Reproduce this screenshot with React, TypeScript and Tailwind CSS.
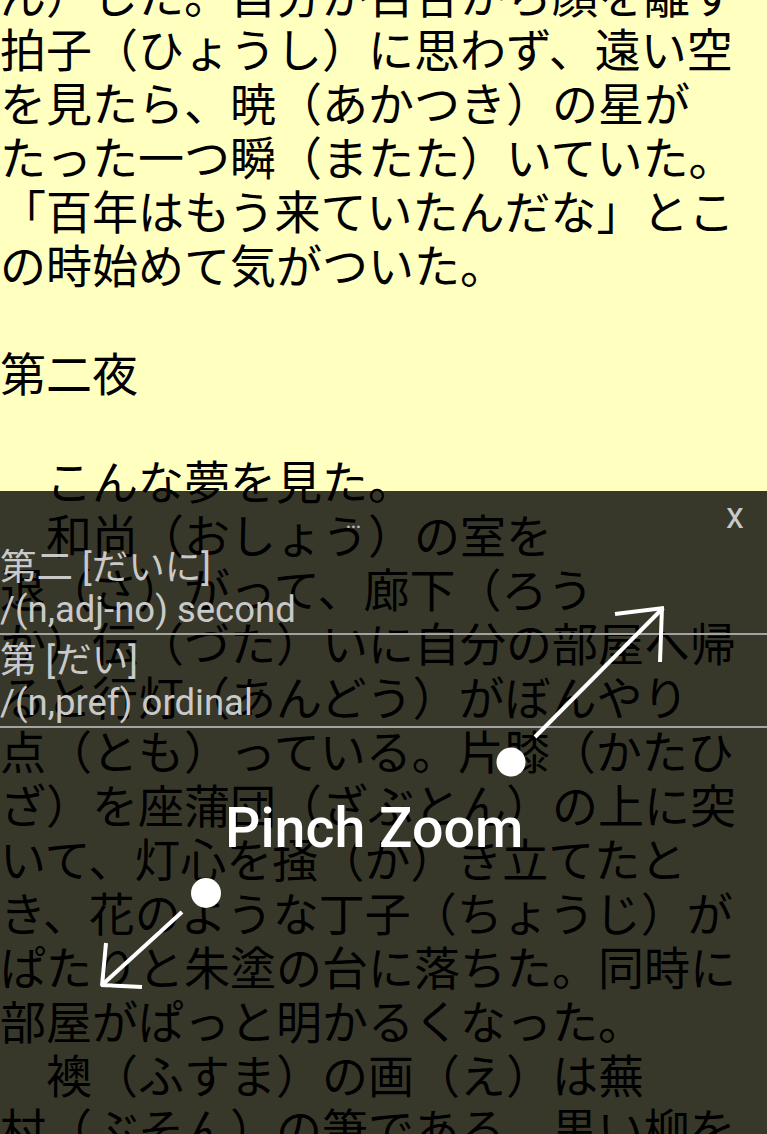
const lines: string[] = [
  "ん）した。自分が百合から顔を離す",
  "拍子（ひょうし）に思わず、遠い空",
  "を見たら、暁（あかつき）の星が",
  "たった一つ瞬（またた）いていた。",
  "「百年はもう来ていたんだな」とこ",
  "の時始めて気がついた。",
  "",
  "第二夜",
  "",
  "　こんな夢を見た。",
  "　和尚（おしょう）の室を",
  "退（さ）がって、廊下（ろう",
  "か）伝（づた）いに自分の部屋へ帰",
  "ると行灯（あんどう）がぼんやり",
  "点（とも）っている。片膝（かたひ",
  "ざ）を座蒲団（ざぶとん）の上に突",
  "いて、灯心を掻（か）き立てたと",
  "き、花のような丁子（ちょうじ）が",
  "ぱたりと朱塗の台に落ちた。同時に",
  "部屋がぱっと明かるくなった。",
  "　襖（ふすま）の画（え）は蕪",
  "村（ぶそん）の筆である。黒い柳を",
];

const entries = [
  { word: "第二 [だいに]", gloss: "/(n,adj-no) second" },
  { word: "第 [だい]", gloss: "/(n,pref) ordinal" },
];

function PinchHint() {
  return (
    <>
      <svg className="pointer-events-none absolute inset-0 h-full w-full" viewBox="0 0 767 1134" fill="none">
        <g stroke="#ffffff" strokeWidth="4">
          <line x1="535" y1="737" x2="663" y2="608" />
          <line x1="615" y1="614" x2="664" y2="608" />
          <line x1="662" y1="607" x2="660" y2="662" />
          <line x1="182" y1="912" x2="102" y2="985" />
          <line x1="101" y1="985" x2="142" y2="987" />
          <line x1="102" y1="986" x2="106" y2="943" />
        </g>
        <circle cx="511" cy="762" r="14.5" fill="#ffffff" />
        <circle cx="206" cy="893" r="15" fill="#ffffff" />
      </svg>
      <div className="pointer-events-none absolute left-[225px] top-[801px] whitespace-nowrap font-['Roboto',sans-serif] text-[55.5px] font-medium leading-none text-white">
        Pinch Zoom
      </div>
    </>
  );
}

export default function App() {
  return (
    <div className="relative h-[1134px] w-full overflow-hidden bg-[#ffffc0]">
      <div className="mt-[-34px] font-['Noto_Sans_CJK_JP','Noto_Sans_CJK_SC',sans-serif] text-[46px] leading-[54px] text-black">
        {lines.map((line, i) => (
          <div key={i} className="h-[54px] whitespace-nowrap">
            {line}
          </div>
        ))}
      </div>

      <div className="absolute inset-x-0 bottom-0 top-[491px] flex flex-col bg-black/[0.78] font-['Roboto','Noto_Sans_CJK_JP',sans-serif] text-[#c9c9c9]">
        <div className="flex h-[51px] items-baseline pt-[7px]">
          <div className="flex flex-1 justify-center text-[17px] font-bold leading-[20px] text-[#bdbdbd]">...</div>
          <div className="w-[60px] pl-[19px] text-[36px] leading-[36px]">x</div>
        </div>
        {entries.map((e) => (
          <div key={e.word} className="border-b-2 border-[#a3a3a3] pb-[2px] pt-[5px] text-[36.5px] leading-[42px]">
            <div className="whitespace-nowrap">{e.word}</div>
            <div className="whitespace-nowrap">{e.gloss}</div>
          </div>
        ))}
      </div>

      <PinchHint />
    </div>
  );
}
